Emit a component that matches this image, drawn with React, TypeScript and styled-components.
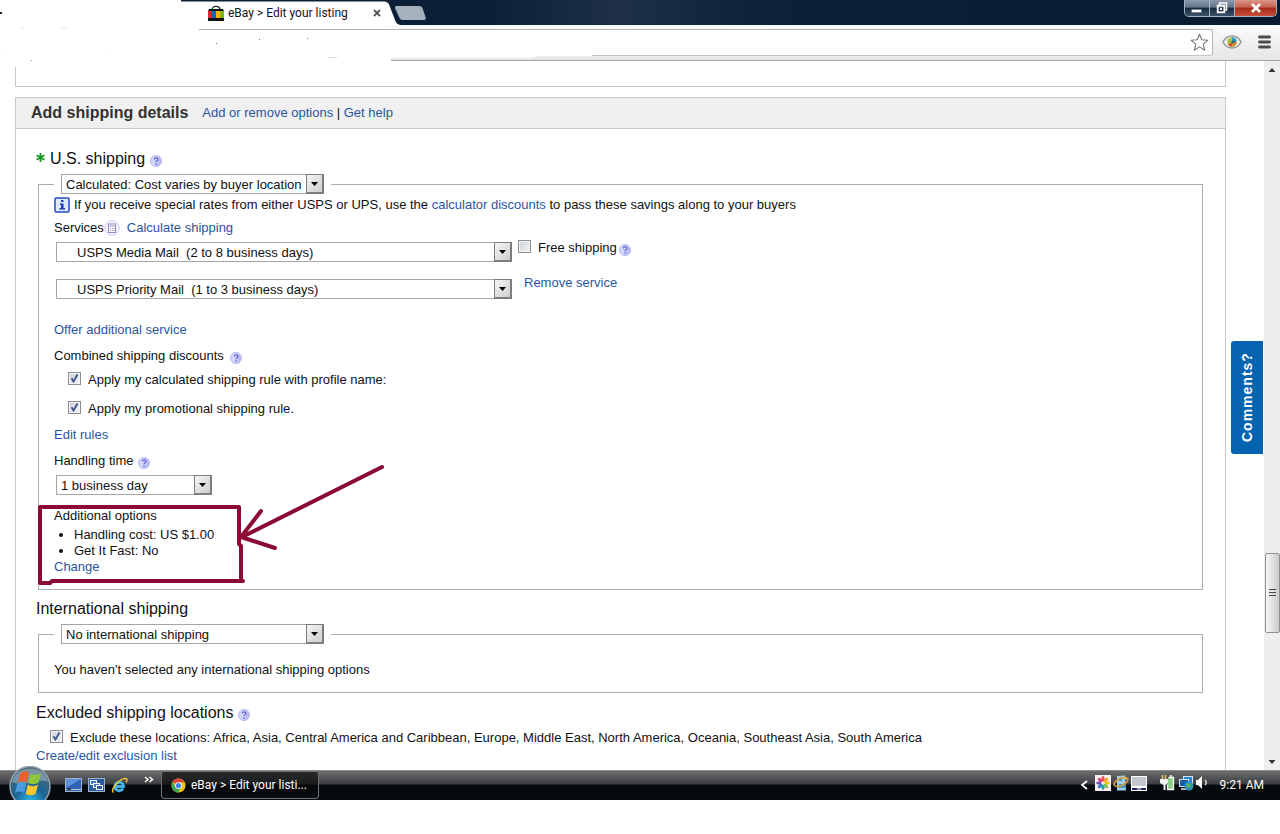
import React from "react";
import styled, { createGlobalStyle } from "styled-components";

const Global = createGlobalStyle`
  *, *::before, *::after { box-sizing: border-box; }
  body {
    margin: 0;
    background: #fff;
    color: #111;
    font: 13px/16px "Liberation Sans", Arial, sans-serif;
  }
`;

/* ---------- Browser frame ---------- */

const Page = styled.div`
  display: flex;
  flex-direction: column;
`;

const TitleBar = styled.header`
  position: relative;
  display: flex;
  align-items: stretch;
  height: 25px;
  background: linear-gradient(90deg, #fff 181px, #0b1f36 181px, #0b1f36 480px, #1d3047 620px, #0b2238 60%, #081b31);
`;

const TabShape = styled.svg`
  position: absolute;
  left: 180px;
  top: 0;
  width: 260px;
  height: 25px;
`;

const Tab = styled.div`
  position: relative;
  display: flex;
  align-items: center;
  gap: 4px;
  width: 175px;
  margin-left: 208px;
  padding-top: 1px;
  font: 12px/16px Roboto, "Open Sans", sans-serif;
  color: #1c1020;
`;

const TabTitle = styled.span`
  flex: 1;
  white-space: nowrap;
`;

const TabClose = styled.button`
  display: flex;
  padding: 2px;
  border: 0;
  background: none;
`;

const WindowButtons = styled.div`
  display: flex;
  height: 17px;
  margin-left: auto;
  margin-right: 3px;
  border: 1px solid #a9b4c0;
  border-top: 0;
  border-radius: 0 0 5px 5px;
  overflow: hidden;
`;

const WindowButton = styled.button<{ $close?: boolean }>`
  display: flex;
  align-items: center;
  justify-content: center;
  width: ${(p) => (p.$close ? 41 : 25)}px;
  padding: 0;
  border: 0;
  border-right: ${(p) => (p.$close ? "0" : "1px solid #a9b4c0")};
  background: ${(p) =>
    p.$close
      ? "linear-gradient(#d9968a, #c4604f 45%, #a82a16 50%, #c8503a)"
      : "linear-gradient(#8c9aaa, #64758a 45%, #15293e 50%, #3c546a)"};
`;

const Toolbar = styled.div`
  position: relative;
  display: flex;
  align-items: center;
  height: 36px;
  padding: 0 8px 2px 0;
  background: linear-gradient(90deg, #fff 391px, transparent 391px),
    linear-gradient(#fafafa, #e6e6e6 35px, #a3a3a3 35px);
`;

const AddressBar = styled.div`
  position: relative;
  display: flex;
  align-items: center;
  flex: 1;
  height: 27px;
  margin-left: 199px;
  margin-right: 9px;
  padding-right: 3px;
  border: 1px solid #b4b4b4;
  border-left: 0;
  border-bottom-color: #c4c4c4;
  border-radius: 0 3px 3px 0;
  background: #fff;
`;

const AddressInput = styled.input`
  flex: 1;
  min-width: 0;
  border: 0;
  background: transparent;
  outline: 0;
`;

const ToolButton = styled.button`
  display: flex;
  padding: 0;
  border: 0;
  background: none;
  & + & {
    margin-left: 15px;
  }
`;

const Smudges = styled.svg`
  position: absolute;
  z-index: 1;
  left: 0;
  top: 0;
  width: 600px;
  height: 67px;
  pointer-events: none;
`;

const Viewport = styled.div`
  display: flex;
  position: relative;
`;

const Scrollbar = styled.div`
  position: relative;
  display: flex;
  flex-direction: column;
  align-items: center;
  width: 16px;
  background: #eee;
`;

const ScrollArrow = styled.svg`
  width: 16px;
  height: 17px;
`;

const ScrollThumb = styled.div`
  display: flex;
  flex-direction: column;
  align-items: center;
  justify-content: center;
  gap: 1px;
  width: 15px;
  height: 80px;
  margin-top: 475px;
  margin-bottom: auto;
  border: 1px solid #8f8f8f;
  border-radius: 2px;
  background: linear-gradient(90deg, #f6f6f6, #e4e4e4 45%, #cacaca);
`;

const Grip = styled.i`
  width: 7px;
  height: 2px;
  border-top: 1px solid #444;
`;

const CommentsTab = styled.button`
  position: absolute;
  right: 17px;
  top: 280px;
  width: 32px;
  height: 113px;
  padding: 0;
  border: 0;
  border-radius: 0 3px 3px 0;
  background: #0563b0;
  color: #fff;
  font: bold 14px/32px "Liberation Sans", Arial, sans-serif;
  letter-spacing: 1px;
  writing-mode: vertical-rl;
  transform: rotate(180deg);
`;

/* ---------- Listing form ---------- */

const Main = styled.main`
  flex: 1;
  min-width: 0;
  display: flex;
  flex-direction: column;
  padding: 0 38px 0 15px;
`;

const PreviousPanel = styled.div`
  height: 26px;
  margin-bottom: 10px;
  border: 1px solid #c9c9c9;
  border-top: 0;
`;

const Panel = styled.section`
  border: 1px solid #c9c9c9;
  border-bottom: 0;
`;

const PanelHeader = styled.div`
  display: flex;
  align-items: center;
  height: 31px;
  padding-left: 15px;
  border-bottom: 1px solid #c9c9c9;
  background: #f0f0f0;
`;

const PanelTitle = styled.h2`
  margin: 0 14px 0 0;
  font-size: 16px;
  line-height: 20px;
  color: #333;
`;

const PanelBody = styled.form`
  padding: 20px 20px 6px;
`;

const Heading = styled.h3<{ $top?: number }>`
  display: flex;
  align-items: center;
  gap: 5px;
  margin: ${(p) => p.$top ?? 0}px 0 0;
  font-size: 16px;
  font-weight: normal;
  line-height: 20px;
`;

const Link = styled.a`
  color: #2a55a0;
  text-decoration: none;
`;

const Fieldset = styled.fieldset`
  position: relative;
  min-width: 0;
  margin: 5px 2px 0;
  padding: 0 15px 14px;
  border: 1px solid #adadad;
`;

const Legend = styled.legend`
  padding: 0 7px;
`;

const Row = styled.div<{ $top?: number; $height?: number; $indent?: number; $gap?: number }>`
  display: flex;
  align-items: center;
  gap: ${(p) => p.$gap ?? 0}px;
  min-height: ${(p) => p.$height ?? 16}px;
  margin-top: ${(p) => p.$top ?? 0}px;
  padding-left: ${(p) => p.$indent ?? 0}px;
`;

const ServiceLabel = styled.span`
  display: flex;
  align-items: center;
  margin-right: 7px;
`;

const ServiceGrid = styled.div`
  display: grid;
  grid-template-columns: 456px auto;
  grid-template-rows: 22px 24px;
  column-gap: 6px;
  row-gap: 13px;
  align-items: start;
  justify-content: start;
  padding-left: 2px;
`;

const ServiceLink = styled(Link)`
  padding-left: 6px;
`;

const SelectFrame = styled.span<{ $width: number }>`
  display: grid;
  grid-template-columns: minmax(0, 1fr);
  align-self: end;
  width: ${(p) => p.$width}px;
  height: 20px;
`;

const SelectBox = styled.select<{ $indent?: number }>`
  grid-area: 1 / 1;
  width: 100%;
  height: 20px;
  margin: 0;
  padding: 1px 18px 0 ${(p) => p.$indent ?? 4}px;
  appearance: none;
  border: 1px solid #a5a5a5;
  border-radius: 0;
  background: #fff;
  color: inherit;
  font: inherit;
`;

const SelectArrow = styled.span`
  grid-area: 1 / 1;
  justify-self: end;
  display: flex;
  align-items: center;
  justify-content: center;
  width: 18px;
  height: 20px;
  border: 1px solid #7d7d7d;
  border-right-width: 2px;
  border-bottom-width: 2px;
  background: linear-gradient(135deg, #f4f4f4, #cfcfcf);
  pointer-events: none;
`;

const CheckLabel = styled.label`
  display: flex;
  align-items: flex-start;
  gap: 7px;
`;

const CheckFrame = styled.span`
  display: grid;
  width: 13px;
  height: 13px;
`;

const CheckInput = styled.input`
  grid-area: 1 / 1;
  width: 13px;
  height: 13px;
  margin: 0;
  appearance: none;
  border: 1px solid #8a8f96;
  background: linear-gradient(135deg, #cbcfd5, #f6f6f6);
  box-shadow: inset 0 0 0 1px #f4f4f4;
`;

const CheckMark = styled.svg`
  grid-area: 1 / 1;
  width: 13px;
  height: 13px;
  pointer-events: none;
`;

const HelpButton = styled.button`
  display: flex;
  padding: 3px 0 0;
  border: 0;
  background: none;
`;

const OptionList = styled.ul`
  margin: 3px 0 0;
  padding-left: 20px;
`;

const Annotation = styled.svg`
  position: absolute;
  left: -3px;
  top: 268px;
  width: 352px;
  height: 126px;
  pointer-events: none;
`;

/* ---------- Taskbar ---------- */

const Taskbar = styled.footer`
  position: relative;
  display: flex;
  align-items: center;
  height: 30px;
  padding-right: 16px;
  background: linear-gradient(#8b8b8b 1px, #6c6d6f 1px, #3c3e41 14px, #060a0d 15px, #050b10);
  color: #fff;
  font: 12px/16px Roboto, "Open Sans", sans-serif;
`;

const StartButton = styled.button`
  align-self: flex-end;
  display: flex;
  width: 44px;
  height: 34px;
  margin: 0 13px 0 8px;
  padding: 0;
  border: 0;
  background: none;
`;

const QuickLaunch = styled.div`
  display: flex;
  align-items: center;
  gap: 6px;
`;

const IconButton = styled.button`
  display: flex;
  padding: 0;
  border: 0;
  background: none;
`;

const TaskButton = styled.button`
  display: flex;
  align-items: center;
  gap: 5px;
  width: 158px;
  height: 28px;
  margin-left: 7px;
  padding: 0 9px;
  border: 1px solid #6f7274;
  border-radius: 3px;
  background: linear-gradient(#26282a, #1a1c1e 12px, #050607 13px, #0c0e10);
  color: #fff;
  font: inherit;
  white-space: nowrap;
  svg {
    flex: none;
  }
`;

const Tray = styled.div`
  display: flex;
  align-items: center;
  gap: 2px;
  margin-left: auto;
`;

const TrayGroup = styled.div`
  display: flex;
  align-items: center;
  gap: 2px;
  margin: 0 11px 4px 5px;
  & + & {
    margin-left: 0;
    margin-right: 9px;
  }
`;

/* ---------- Small parts ---------- */

const Help = () => (
  <HelpButton type="button" aria-label="Help">
    <svg width="12" height="12" viewBox="0 0 12 12">
      <circle cx="6" cy="6" r="5.5" fill="#d4d6fa" stroke="#b3b5f0" />
      <path d="M6 1a5 5 0 0 1 5 5c0 3-2 5-5 5 3-3 3-7 0-10z" fill="#b8baf6" />
      <path d="M4.2 4.6c0-2.3 3.6-2.2 3.6-.2C7.8 5.8 6 5.7 6 7.3" fill="none" stroke="#5a60cc" strokeWidth="1.2" />
      <rect x="5.3" y="8.3" width="1.4" height="1.4" fill="#5a60cc" />
    </svg>
  </HelpButton>
);

type SelectProps = { id: string; label: string; value: string; width: number; indent?: number };

const Select = ({ id, label, value, width, indent }: SelectProps) => (
  <SelectFrame $width={width}>
    <SelectBox id={id} aria-label={label} $indent={indent}>
      <option>{value}</option>
    </SelectBox>
    <SelectArrow>
      <svg width="7" height="4" viewBox="0 0 7 4">
        <path d="M0 0h7L3.5 4z" fill="#000" />
      </svg>
    </SelectArrow>
  </SelectFrame>
);

const Check = ({ on, children }: { on?: boolean; children: React.ReactNode }) => (
  <CheckLabel>
    <CheckFrame>
      <CheckInput type="checkbox" defaultChecked={on} />
      {on && (
        <CheckMark viewBox="0 0 13 13">
          <path d="M3.5 6.2l2 3.3 4-7" fill="none" stroke="#3f5490" strokeWidth="1.9" />
        </CheckMark>
      )}
    </CheckFrame>
    <span>{children}</span>
  </CheckLabel>
);

const BagIcon = () => (
  <svg width="16" height="16" viewBox="0 0 16 16">
    <path d="M4 5C4 .2 12 .2 12 5" fill="none" stroke="#222" strokeWidth="1.2" />
    <path d="M1 4h14l1 2H0z" fill="#111" />
    <rect x="0" y="13" width="16" height="3" fill="#111" />
    <rect x="0" y="6" width="4" height="7" fill="#e0282e" />
    <rect x="4" y="6" width="4" height="7" fill="#1764c0" />
    <rect x="8" y="6" width="4" height="7" fill="#f5b301" />
    <rect x="12" y="6" width="4" height="7" fill="#7fb51a" />
  </svg>
);

const EyeIcon = () => (
  <svg width="20" height="16" viewBox="0 0 20 16">
    <path d="M1 8C5 0 15 0 19 8 15 16 5 16 1 8z" fill="#f3f3f3" stroke="#9a9a9a" strokeWidth="1.6" />
    <circle cx="10" cy="8" r="4.8" fill="#a9c23f" />
    <path d="M10 8V3.2A4.8 4.8 0 0 1 14.8 8z" fill="#2b9fc5" />
    <path d="M10 8h4.8A4.8 4.8 0 0 1 10 12.8z" fill="#e58a2c" />
    <path d="M10 8v4.8A4.8 4.8 0 0 1 6 10.5z" fill="#d9503c" />
    <circle cx="11" cy="8" r="1.8" fill="#3c6a78" />
  </svg>
);

const StartOrb = () => (
  <svg width="44" height="34" viewBox="0 0 44 34">
    <defs>
      <radialGradient id="orb" cx="50%" cy="90%" r="85%">
        <stop offset="0" stopColor="#2fc0ee" />
        <stop offset=".45" stopColor="#1b6597" />
        <stop offset="1" stopColor="#4b6574" />
      </radialGradient>
    </defs>
    <circle cx="22" cy="20.5" r="20" fill="url(#orb)" stroke="#91a3ac" strokeWidth="1.5" />
    <path d="M4 16C8-2 36-2 40 16 30 11 18 22 4 16z" fill="#a8bcc6" opacity=".55" />
    <path d="M12.5 7c3-2 6-2 8.5-.3L18.8 16.500c-3-2-6-1.500-9 0z" fill="#e8632a" />
    <path d="M22.5 7.5c3 2 6.5 1.800 10.500-.5l-2.500 9.800c-3.500 2-7 1.800-10.200.1z" fill="#8dc63a" />
    <path d="M9.3 18c3-1.800 6-1.800 9 0l-2.300 9c-3-2-6-1.800-9 0z" fill="#4b9be0" />
    <path d="M19.8 18.800c3 1.800 6.500 1.800 10.200 0l-2.400 9c-3.500 2-6.700 2-10 .2z" fill="#f9c92a" />
  </svg>
);

const ChromeIcon = () => (
  <svg width="15" height="15" viewBox="0 0 16 16">
    <circle cx="8" cy="8" r="7.5" fill="#f4c20d" />
    <path d="M8 8L1.5 4.2A7.5 7.5 0 0 1 14.6 4.5H8z" fill="#db4437" />
    <path d="M1.5 4.2A7.5 7.5 0 0 0 7.5 15.5L10.8 9.8 8 8 4.8 9.5z" fill="#3aa757" />
    <circle cx="8" cy="8" r="3.6" fill="#fff" />
    <circle cx="8" cy="8" r="2.8" fill="#4285f4" />
  </svg>
);

const DesktopIcon = () => (
  <svg width="17" height="14" viewBox="0 0 17 14">
    <rect x=".5" y=".5" width="16" height="13" fill="#2f62b4" stroke="#9fb2cc" />
    <path d="M1 1h15L1 10z" fill="#5c8fdc" />
    <path d="M1 11.5h15" stroke="#b9c8dd" />
    <rect x="2" y="10" width="4" height="2" fill="#3c434c" />
  </svg>
);

const SwitchIcon = () => (
  <svg width="17" height="14" viewBox="0 0 17 14">
    <rect x=".5" y=".5" width="16" height="13" fill="#2b5a9e" stroke="#9fb2cc" />
    <rect x="2.5" y="2.5" width="6" height="4" fill="#3c79c4" stroke="#fff" />
    <rect x="5.5" y="5.5" width="6" height="4" fill="#3c79c4" stroke="#fff" />
    <rect x="8.5" y="7.5" width="6" height="4" fill="#2b5a9e" stroke="#fff" />
  </svg>
);

const ExplorerIcon = () => (
  <svg width="17" height="17" viewBox="0 0 17 17">
    <path d="M4 9.5h8.5C12.5 4 4 4 4 9.5c0 4.8 6 5.5 8 2" fill="none" stroke="#3fb2f2" strokeWidth="2.8" />
    <path d="M2.5 15.5C-1.5 13 9 .5 15 1.5c1.5.5 1 2.500 0 4" fill="none" stroke="#f1c232" strokeWidth="1.5" />
  </svg>
);

const petals = ["#e84c3d", "#f39c27", "#f1c40f", "#7cc142", "#22a39a", "#2f7fd0", "#6a4fb0", "#d63f8c"];

const FlowerIcon = () => (
  <svg width="16" height="16" viewBox="0 0 16 16">
    <rect width="16" height="16" fill="#fbeef0" />
    {petals.map((color, i) => (
      <ellipse key={color} cx="8" cy="3.8" rx="1.6" ry="2.7" fill={color} transform={`rotate(${i * 45} 8 8)`} />
    ))}
  </svg>
);

const UpdateIcon = () => (
  <svg width="16" height="16" viewBox="0 0 16 16">
    <path d="M4 1l8-.5 1 15H4z" fill="#9fd0ea" />
    <path d="M6 3h3v3H6zM6 9h6v4H6z" fill="#4a94c4" />
    <ellipse cx="8" cy="7" rx="7.5" ry="3.5" transform="rotate(-25 8 7)" fill="none" stroke="#d99a3a" strokeWidth="1.6" />
    <path d="M10 3l3-1 1 3z" fill="#e4bd52" />
  </svg>
);

const TouchpadIcon = () => (
  <svg width="16" height="16" viewBox="0 0 16 16">
    <rect x=".5" y="1.5" width="15" height="10" fill="#c3c5cf" stroke="#fff" />
    <rect x=".5" y="12.5" width="15" height="3" fill="#1a2468" stroke="#fff" />
    <path d="M6 14h4" stroke="#fff" />
  </svg>
);

const PowerIcon = () => (
  <svg width="16" height="16" viewBox="0 0 16 16">
    <path d="M2.5 0v4M5.5 0v4" stroke="#e5c65c" strokeWidth="1.5" />
    <path d="M0 4h8v4L5.5 10v5h-2v-5L0 8z" fill="#f3f3f3" />
    <path d="M8.5 2.5h5v12h-6v-5" fill="#8ccf8a" stroke="#fff" strokeWidth="1.3" />
    <path d="M10 1h2" stroke="#fff" strokeWidth="1.5" />
  </svg>
);

const NetworkIcon = () => (
  <svg width="16" height="16" viewBox="0 0 16 16">
    <rect x="5.5" y="1.5" width="9" height="7" fill="#2f82d8" stroke="#cfe2f2" />
    <rect x="1.5" y="4.5" width="9" height="7" fill="#175ea8" stroke="#cfe2f2" />
    <path d="M3 14h6" stroke="#e8eef4" strokeWidth="1.5" />
    <circle cx="11" cy="11" r="4.5" fill="#2a86cc" />
    <path d="M9 8l4 1-1 3-2 2-1-2-1-2zM13 12l2-2-1 4z" fill="#4cb45a" />
  </svg>
);

const VolumeIcon = () => (
  <svg width="13" height="16" viewBox="0 0 13 16">
    <path d="M0 5h2l4-4v13l-4-4H0z" fill="#f6f6f6" />
    <path d="M9 5c1.500 1.500 1.500 3.500 0 5" fill="none" stroke="#e4e4e4" strokeWidth="1.3" />
  </svg>
);

/* ---------- Page ---------- */

export default function App() {
  return (
    <Page>
      <Global />
      <TitleBar>
        <TabShape viewBox="0 0 260 25">
          <path d="M0 1.5L26 1.5 205 1.5C208 2 209 4 210 7L215 20C216 23 218 25 222 25H0z" fill="#fff" />
          <path d="M215 8c0-1.5.8-2 2-2h22c2 0 3 1 3.500 2l3 9c.5 2 0 3-1.500 3h-21c-2 0-3-1-3.500-2z" fill="#a5b1bc" />
        </TabShape>
        <Tab>
          <BagIcon />
          <TabTitle>eBay &gt; Edit your listing</TabTitle>
          <TabClose type="button" aria-label="Close tab">
            <svg width="8" height="8" viewBox="0 0 8 8">
              <path d="M1 1l6 6M7 1L1 7" stroke="#555" strokeWidth="1.8" />
            </svg>
          </TabClose>
        </Tab>
        <WindowButtons>
          <WindowButton type="button" aria-label="Minimize">
            <svg width="12" height="12" viewBox="0 0 12 12">
              <rect x=".5" y="7.5" width="10" height="3" fill="#fff" stroke="#5c6875" strokeWidth=".5" />
            </svg>
          </WindowButton>
          <WindowButton type="button" aria-label="Restore">
            <svg width="12" height="12" viewBox="0 0 12 12">
              <path d="M3.5 3V1h7v7H9" fill="none" stroke="#fff" strokeWidth="1.5" />
              <rect x="1.7" y="3.7" width="6.6" height="6.6" fill="none" stroke="#fff" strokeWidth="1.8" />
              <rect x="4" y="6" width="2" height="2" fill="#fff" />
            </svg>
          </WindowButton>
          <WindowButton type="button" aria-label="Close" $close>
            <svg width="12" height="10" viewBox="0 0 12 10">
              <path d="M2 1l8 8M10 1L2 9" stroke="#fff" strokeWidth="2.6" />
            </svg>
          </WindowButton>
        </WindowButtons>
      </TitleBar>
      <Toolbar>
        <AddressBar>
          <AddressInput aria-label="Address" />
          <ToolButton type="button" aria-label="Bookmark this page">
            <svg width="19" height="19" viewBox="0 0 19 19">
              <path
                d="M9.5 1.2l2.3 5.600 6 .5-4.600 3.900 1.500 6-5.200-3.300-5.200 3.300 1.500-6L1.200 7.300l6-.5z"
                fill="#fff"
                stroke="#777"
                strokeWidth="1.1"
                strokeLinejoin="round"
              />
            </svg>
          </ToolButton>
        </AddressBar>
        <ToolButton type="button" aria-label="Extension">
          <EyeIcon />
        </ToolButton>
        <ToolButton type="button" aria-label="Menu">
          <svg width="15" height="14" viewBox="0 0 15 14">
            <path d="M2.5 2h10M2.5 7h10M2.5 12h10" stroke="#4c4c4c" strokeWidth="2.8" strokeLinecap="round" />
          </svg>
        </ToolButton>
      </Toolbar>
      <Smudges viewBox="0 0 600 67">
        <path d="M0 12h2v2H0z" fill="#222" />
        <path d="M199 54h393v2H199zM0 58h391v9H0z" fill="#fff" />
        <path d="M216 43h1v1h-1zM259 39h1v1h-1zM307 38h1v1h-1z" fill="#777" />
        <path d="M31 60h1v1h-1z" fill="#999" />
        <path d="M328 57h9v1h-9z" fill="#ddd" />
        <path d="M391 56h147l-6 2H391z" fill="#fff" />
        <path d="M20 27h4v3h-4zM60 27h8v2h-8zM4 50h3v2H4zM106 51h4v1h-4z" fill="#f7f7f7" />
      </Smudges>
      <Viewport>
        <Main>
          <PreviousPanel />
          <Panel>
            <PanelHeader>
              <PanelTitle>Add shipping details</PanelTitle>
              <span>
                <Link href="#options">Add or remove options</Link> | <Link href="#help">Get help</Link>
              </span>
            </PanelHeader>
            <PanelBody>
              <Heading>
                <svg width="9" height="12" viewBox="0 0 9 12">
                  <path d="M4.5 0v9M.6 2.3l7.800 4.400M8.400 2.300L.6 6.700" stroke="#16961c" strokeWidth="1.8" />
                </svg>
                U.S. shipping
                <Help />
              </Heading>
              <Fieldset>
                <Legend>
                  <Select id="us" label="U.S. shipping" value="Calculated: Cost varies by buyer location" width={263} />
                </Legend>
                <Row $height={22} $gap={4}>
                  <svg width="16" height="16" viewBox="0 0 16 16">
                    <rect x="1" y="1" width="14" height="14" rx="1" fill="#dcebff" stroke="#2448c4" strokeWidth="1.5" />
                    <path d="M7 3h2.5v2H7zM6 6.5h3.5V11H11v1.5H5.5V11H7V8H6z" fill="#1b3bb8" />
                  </svg>
                  <span>
                    If you receive special rates from either USPS or UPS, use the{" "}
                    <Link href="#discounts">calculator discounts</Link> to pass these savings along to your buyers
                  </span>
                </Row>
                <Row $height={24}>
                  <ServiceLabel>
                    Services
                    <svg width="16" height="16" viewBox="0 0 16 16">
                      <circle cx="8" cy="8" r="7.3" fill="#f5f4ff" stroke="#cfcdf2" />
                      <rect x="4.5" y="4" width="7" height="8.5" fill="#fff" stroke="#8f8bc4" />
                      <path
                        d="M5.5 6h5M6 8.5h1M8 8.5h1M10 8.5h.8M6 10.5h1M8 10.5h1M10 10.5h.8"
                        stroke="#8f8bc4"
                      />
                    </svg>
                  </ServiceLabel>
                  <Link href="#calculate">Calculate shipping</Link>
                </Row>
                <ServiceGrid>
                  <Select
                    id="s1"
                    label="Service 1"
                    value={"USPS Media Mail \u00a0(2 to 8 business days)"}
                    width={456}
                    indent={20}
                  />
                  <Row $gap={2}>
                    <Check>Free shipping</Check>
                    <Help />
                  </Row>
                  <Select
                    id="s2"
                    label="Service 2"
                    value={"USPS Priority Mail \u00a0(1 to 3 business days)"}
                    width={456}
                    indent={20}
                  />
                  <ServiceLink href="#remove">Remove service</ServiceLink>
                </ServiceGrid>
                <Row $top={23}>
                  <Link href="#offer">Offer additional service</Link>
                </Row>
                <Row $top={10} $gap={6}>
                  Combined shipping discounts <Help />
                </Row>
                <Row $top={8} $indent={14}>
                  <Check on>Apply my calculated shipping rule with profile name:</Check>
                </Row>
                <Row $top={13} $indent={14}>
                  <Check on>Apply my promotional shipping rule.</Check>
                </Row>
                <Row $top={10}>
                  <Link href="#rules">Edit rules</Link>
                </Row>
                <Row $top={10} $gap={4}>
                  Handling time <Help />
                </Row>
                <Row $top={6} $indent={2}>
                  <Select id="time" label="Handling time" value="1 business day" width={156} />
                </Row>
                <Row $top={13}>Additional options</Row>
                <OptionList>
                  <li>Handling cost: US $1.00</li>
                  <li>Get It Fast: No</li>
                </OptionList>
                <Row>
                  <Link href="#change">Change</Link>
                </Row>
                <Annotation
                  viewBox="0 0 352 126"
                  fill="none"
                  stroke="#8b0a36"
                  strokeWidth="4"
                  strokeLinecap="round"
                  strokeLinejoin="round"
                >
                  <path d="M4 120V45H203V82L205 84V118" />
                  <path d="M4 121H14L16 119H207" />
                  <path d="M346 5L206 75" />
                  <path d="M225 49L205 75L239 86" />
                </Annotation>
              </Fieldset>
              <Heading $top={9}>International shipping</Heading>
              <Fieldset>
                <Legend>
                  <Select id="intl" label="International shipping" value="No international shipping" width={263} />
                </Legend>
                <Row $top={18}>You haven't selected any international shipping options</Row>
              </Fieldset>
              <Heading $top={10}>
                Excluded shipping locations <Help />
              </Heading>
              <Row $top={7} $indent={14}>
                <Check on>
                  Exclude these locations: Africa, Asia, Central America and Caribbean, Europe, Middle East, North America,
                  Oceania, Southeast Asia, South America
                </Check>
              </Row>
              <Row $top={2}>
                <Link href="#exclusions">Create/edit exclusion list</Link>
              </Row>
            </PanelBody>
          </Panel>
        </Main>
        <Scrollbar>
          <ScrollArrow viewBox="0 0 16 17">
            <path d="M4.5 11h7L8 7z" fill="#333" />
          </ScrollArrow>
          <ScrollThumb>
            <Grip />
            <Grip />
            <Grip />
          </ScrollThumb>
          <ScrollArrow viewBox="0 0 16 17">
            <path d="M4.5 7h7L8 11z" fill="#333" />
          </ScrollArrow>
        </Scrollbar>
        <CommentsTab type="button">Comments?</CommentsTab>
      </Viewport>
      <Taskbar>
        <StartButton type="button" aria-label="Start">
          <StartOrb />
        </StartButton>
        <QuickLaunch>
          <IconButton type="button" aria-label="Show desktop">
            <DesktopIcon />
          </IconButton>
          <IconButton type="button" aria-label="Switch windows">
            <SwitchIcon />
          </IconButton>
          <IconButton type="button" aria-label="Internet Explorer">
            <ExplorerIcon />
          </IconButton>
        </QuickLaunch>
        <IconButton type="button" aria-label="More">
          <svg width="26" height="22" viewBox="0 0 26 22">
            <path d="M17 3l3 2.5L17 8M21.5 3l3 2.5L21.5 8" fill="none" stroke="#fff" strokeWidth="1.5" />
          </svg>
        </IconButton>
        <TaskButton type="button">
          <ChromeIcon />
          eBay &gt; Edit your listi...
        </TaskButton>
        <Tray>
          <svg width="8" height="10" viewBox="0 0 8 10">
            <path d="M7 1L2 5l5 4" fill="none" stroke="#fff" strokeWidth="1.8" />
          </svg>
          <TrayGroup>
            <FlowerIcon />
            <UpdateIcon />
            <TouchpadIcon />
          </TrayGroup>
          <TrayGroup>
            <PowerIcon />
            <NetworkIcon />
            <VolumeIcon />
          </TrayGroup>
          9:21 AM
        </Tray>
      </Taskbar>
    </Page>
  );
}
